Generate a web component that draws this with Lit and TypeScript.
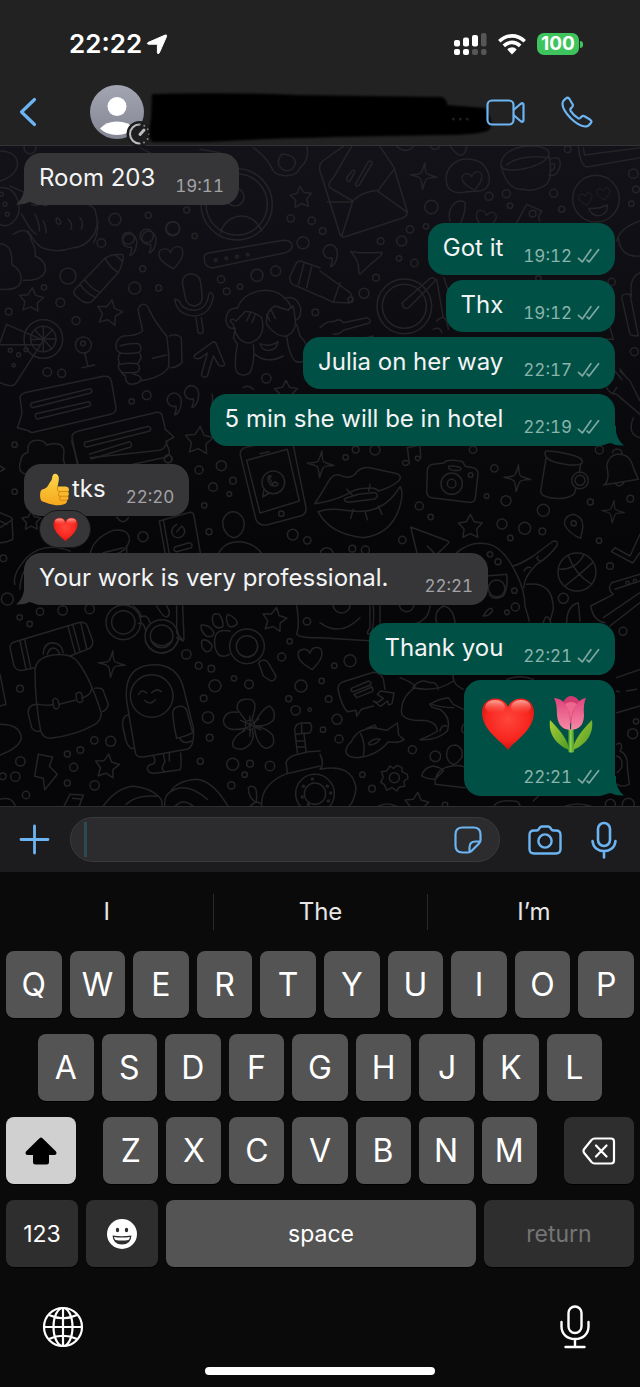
import { LitElement, html, svg, css, nothing } from "lit";
import { customElement, property } from "lit/decorators.js";

type Dot = [number, number, number];

interface Message {
  text?: string;
  time: string;
  mine?: boolean;
  tail?: boolean;
  thumb?: boolean;
  gifts?: boolean;
  reaction?: boolean;
  roomy?: boolean;
  first?: boolean;
}

const MESSAGES: Message[] = [
  { text: "Room 203", time: "19:11", tail: true },
  { text: "Got it", time: "19:12", mine: true, first: true },
  { text: "Thx", time: "19:12", mine: true },
  { text: "Julia on her way", time: "22:17", mine: true },
  { text: "5 min she will be in hotel", time: "22:19", mine: true, tail: true },
  { text: "tks", time: "22:20", thumb: true, reaction: true, first: true },
  { text: "Your work is very professional.", time: "22:21", tail: true, roomy: true },
  { text: "Thank you", time: "22:21", mine: true, first: true },
  { gifts: true, time: "22:21", mine: true, tail: true },
];

const star = (cx: number, cy: number, r: number, turn = 0) => {
  const pts: string[] = [];
  for (let i = 0; i < 10; i++) {
    const a = ((i * 36 - 90 + turn) * Math.PI) / 180;
    const k = i % 2 ? r * 0.52 : r;
    pts.push(`${(cx + k * Math.cos(a)).toFixed(1)},${(cy + k * Math.sin(a)).toFixed(1)}`);
  }
  return svg`<polygon points=${pts.join(" ")} />`;
};

const sparkle = (x: number, y: number, r: number) =>
  svg`<path transform="translate(${x} ${y}) scale(${r / 40}) rotate(5)" d="M0-40Q4-8 10-8Q12-6 40 0Q10 4 9 9Q6 12 0 40Q-6 10-10 8Q-14 4-40 0Q-10-4-9-9Q-5-14 0-40Z" />`;

const heart = (x: number, y: number, r: number, turn = 0) =>
  svg`<path transform="translate(${x} ${y}) rotate(${turn}) scale(${r / 38})" d="M0 36C-22 18-38 4-38-14C-38-36-8-38 0-16C8-38 38-36 38-14C38 4 22 18 0 36Z" />`;

const quote = (x: number, y: number) =>
  svg`<path transform="translate(${x} ${y})" d="M8 16C-14 20-26-2-12-18C8-34 26-14 24 6C22 28 12 40 4 42C2 38 12 30 8 16Z" />`;

const dots = (list: Dot[]) => list.map(([x, y, r]) => svg`<circle cx=${x} cy=${y} r=${r} />`);

/* Each tile of the wallpaper is drawn on a 960x720 grid, three units to the pixel. */
const tile = (x: number, y: number, list: Dot[], art: unknown) =>
  svg`<g transform="translate(${x} ${y}) scale(.33333)">${dots(list)}${art}</g>`;

const wallpaper = () => html`
  <svg class="wall" viewBox="0 145 640 661" preserveAspectRatio="xMidYMin slice" aria-hidden="true">
    ${tile(0, 0, [[345,655,18],[445,643,9],[560,627,9],[518,683,21],[872,652,11],[935,659,11],[90,440,18],[440,705,20],[385,712,18],[710,610,107],[710,610,92],[705,588,27],[15,610,6],[22,640,6],[4,580,6]], svg`
      ${star(903, 590, 34, -5)}
      <path d="M662 695C675 640 755 620 785 690M0 450C70 450 70 520 0 540M30 555L75 575M0 560C50 555 70 620 50 650C30 680 10 675 0 670M64 640C75 650 85 690 110 700M95 610C110 620 120 600 135 615C160 600 180 612 200 608C240 590 270 610 285 625C300 680 290 710 280 725M105 640Q120 670 118 690M130 660Q140 680 138 695M170 650q18 10 10 20q-16 0-10-20M205 655q14 12 8 30M240 650q12 14 4 34M760 440C800 470 810 490 820 510C840 530 890 530 900 500C925 480 925 450 920 436M845 460C820 490 850 520 875 505C900 480 880 460 845 460M420 440L455 458M600 445L660 455" />`)}
    ${tile(320, 0, [[507,586,12],[559,578,12],[570,614,8],[334,618,20],[701,577,12],[725,625,9],[940,518,14],[934,608,8],[318,676,8],[270,685,11],[948,565,10],[743,445,10],[345,430,15],[8,690,10],[828,593,70],[638,638,10]], svg`
      ${sparkle(311, 525, 40)} ${heart(458, 540, 30, -10)} ${heart(497, 656, 30, 10)}
      ${heart(797, 594, 20, -10)} ${heart(851, 578, 20, -10)}
      <path d="M806 622Q835 625 862 612C866 650 815 655 806 622ZM440 572C410 580 385 572 380 548C370 500 410 470 450 475C500 478 520 530 500 560C485 575 460 570 440 572M390 435Q430 490 440 436M230 436Q260 460 280 436" />
      <path d="M542 490C545 450 600 430 650 436C680 440 690 450 686 462C670 500 560 520 545 498ZM542 490Q560 570 610 565Q640 575 680 550Q698 530 688 465M690 475Q725 460 720 495Q710 530 686 522M692 490Q706 484 704 498Q700 508 690 510M560 492Q600 460 684 470" />
      <path d="M70 436L8 480Q-5 490 0 510L60 700Q66 712 80 706L250 650Q262 644 262 632L222 500L180 436M222 505L175 568Q130 570 98 600L30 560Q20 550 40 530L95 436M22 603L98 602L65 706M175 572L262 634M80 530L98 508Q106 506 104 514L90 540Q80 545 80 530ZM106 550L145 482Q155 476 156 488L118 552Q108 560 106 550Z" />
      <path d="M775 436Q780 490 800 498L960 470M790 440L794 462L960 440M390 660C380 620 410 590 435 604C440 640 420 660 415 690M590 665L620 610L665 630Q650 650 660 660" />`)}
    ${tile(0, 220, [[304,66,13],[204,165,24],[132,199,8],[181,245,13],[26,272,10],[228,299,12],[404,201,18],[476,201,9],[428,143,9],[519,22,20],[584,45,8],[909,65,18],[771,163,18],[827,150,15],[663,175,11],[680,211,10],[720,197,8],[946,274,10],[142,453,13],[185,457,12],[440,523,13],[395,541,8],[44,671,8],[799,472,14],[505,714,12],[130,354,58],[130,354,38],[250,372,24],[249,367,7],[31,388,6],[56,401,6],[78,386,6],[41,433,5],[647,118,4],[679,112,4],[711,107,4],[743,101,4]], svg`
      ${star(94, 238, 38, 5)} ${star(328, 276, 40, 12)} ${star(597, 660, 44, 5)} ${star(858, 514, 36)} ${heart(515, 110, 36, -10)}
      ${quote(386, 62)} ${quote(444, 54)} ${quote(520, 540)} ${quote(572, 518)}
      <path d="M40 40Q85 10 95 60Q110 90 105 105Q140 120 136 150Q125 180 70 178M0 68Q40 70 35 130Q70 150 62 185Q50 210 0 205M85 30Q110 80 140 85Q180 95 220 80Q260 78 285 35L294 0M20 310L130 358L45 490Q35 500 0 485M20 310L0 365M0 371L118 371M130 354V316M130 354L104 326M130 354L158 326M130 354L92 356M130 354L168 354M130 354L156 384M130 354V392M254 396L264 436M246 440L284 432" />
      <path d="M225 205L315 112Q330 100 366 100Q374 106 366 128Q360 150 350 160L275 242Q262 250 246 240L226 224Q218 214 225 205ZM315 112Q330 140 356 155M346 101L368 122M240 190Q260 218 285 228M254 176Q274 204 300 214" />
      <path d="M428 330L414 266Q420 248 434 250Q446 256 448 268Q470 310 500 345Q510 420 505 440Q485 470 420 480M428 330Q410 345 370 345Q345 355 348 380Q350 392 362 396Q350 410 358 424Q350 440 364 452Q366 462 376 464Q376 488 394 490Q420 488 424 474Q420 462 400 460M360 374Q390 366 415 368Q430 380 418 394Q390 400 362 396M358 430Q390 424 412 428Q424 440 414 452Q390 458 364 454M420 398Q428 412 412 428M458 412L500 402M508 345Q530 336 544 350L546 425Q530 440 512 440" />
      <path d="M547 185Q548 160 572 158Q600 160 602 185L607 230Q604 254 582 255Q560 252 556 230ZM524 234Q530 282 585 285Q632 280 640 225Q632 206 626 222Q620 265 583 268Q545 266 538 240ZM588 290L594 334Q604 342 610 332L604 290" />
      <path d="M613 110Q610 98 630 95L850 58Q880 58 876 80Q870 92 852 96L640 140Q612 142 613 110ZM870 165L890 124Q900 116 912 124L960 140M870 165Q866 190 890 195L960 226M912 128L895 190M935 138L920 200" />
      <path d="M582 404L640 362Q648 362 650 372L674 430Q668 440 656 432L640 405L622 465Q610 474 604 462L622 396L600 412Q582 416 582 404Z" />
      <path d="M712 262Q730 210 800 208Q850 210 876 262M712 262Q680 258 678 300Q684 325 700 322M852 232Q890 220 902 262Q904 290 890 296M700 310L690 300Q696 290 708 300L735 272Q760 270 785 290Q800 350 750 366Q710 366 700 310ZM885 290L880 255Q868 258 866 268L825 255Q795 270 800 310Q830 350 860 345Q892 330 885 290M740 300L752 275M756 305L766 280M810 300L800 280M826 292L814 268M706 322L700 350L712 370Q700 440 712 455Q730 470 750 455Q766 420 760 372M765 400Q800 430 850 405M860 345Q866 400 885 420Q905 430 922 410Q928 370 900 345L890 310M780 368Q810 380 834 362Q830 390 800 388Q784 384 780 368Z" />
      <path d="M60 530Q62 518 80 514L310 466Q330 464 334 480L348 560Q350 575 332 580L100 634Q92 636 88 630L52 620Q64 590 66 575ZM94 546L270 503Q280 508 272 516L98 560Q88 556 94 546ZM108 578L266 542Q276 548 268 556L112 594Q102 588 108 578Z" />
      <path d="M216 650Q214 636 236 630L470 574Q486 572 488 590L496 625L522 648L498 662L508 690Q510 706 490 710L260 760Q240 764 236 750ZM254 664L446 616Q456 620 450 630L260 678Q250 676 254 664ZM268 700L388 662Q398 668 392 678L274 714M62 720Q64 700 84 694Q80 660 110 658Q130 656 140 672Q190 660 192 690L190 720M730 500Q745 490 760 505M636 520Q640 530 636 550" />`)}
    ${tile(320, 220, [[182,60,10],[245,60,15],[237,112,8],[283,126,11],[168,170,10],[132,217,15],[875,183,11],[943,392,12],[107,686,10],[165,687,15],[459,686,11],[838,687,12],[655,172,8],[253,256,82],[253,256,66],[92,236,8]], svg`
      ${quote(28, 95)}
      <path d="M0 150L90 215Q106 240 88 246L40 244L0 225M60 185L40 244M92 92Q130 98 186 94Q186 104 175 110Q150 130 122 158Q116 160 116 148Q118 120 92 92ZM246 246L330 172Q345 166 345 180L266 260Q250 268 246 246ZM350 175L370 290M372 170L400 260M0 320Q20 300 40 302Q60 290 70 305L140 290Q156 296 148 306L70 328Q60 340 40 340M340 325Q360 315 366 335M350 300Q380 270 385 325M895 50Q900 110 960 105M890 60Q900 20 960 0M905 230Q905 215 930 220L955 345Q935 345 930 340ZM935 225Q925 170 960 155M820 330Q850 310 870 320L880 355H825M860 500Q870 520 890 520L960 580M890 500L880 515M900 450L930 480L960 540M885 450L905 475M900 444L918 468M940 590Q920 640 960 650M120 355L160 345" />`)}
    ${tile(0, 440, [[597,87,12],[664,74,15],[639,138,13],[699,119,10],[688,159,7],[613,193,8],[429,287,15],[627,272,9],[878,281,16],[922,298,11],[504,54,11],[44,152,8],[10,352,10],[22,474,18],[59,529,8],[120,512,11],[89,549,8],[188,508,14],[269,504,14],[559,640,14],[596,674,10],[634,683,10],[845,648,12],[869,601,8],[921,541,11],[844,218,8],[820,124,34],[370,544,52],[370,544,35],[485,586,50],[485,586,34],[741,616,52],[741,616,32]], svg`
      ${star(94, 240, 30)} ${star(823, 537, 38, 10)} ${sparkle(335, 669, 40)} ${sparkle(962, 70, 40)} ${heart(932, 652, 36, -8)}
      <path d="M62 60Q50 95 80 100Q90 130 110 100M192 60Q198 80 180 95L140 110M215 0L235 70M500 0Q500 20 480 28L270 50M0 215L35 230Q40 290 38 295Q20 305 0 305M0 260L38 236M20 250L0 240M0 75L14 84L0 92" />
      <path d="M722 46Q716 24 740 18L850-4Q872-6 880 14L918 200Q920 222 898 226L800 252Q776 254 768 236ZM740 58L862 25L898 180L780 216ZM780 38L808 32M806 104Q800 120 812 132Q830 140 834 128L824 122L818 130L808 112L814 106ZM792 146L788 168L808 156" />
      <path d="M668 240Q680 205 710 214Q740 230 730 265Q720 290 700 290Q668 280 668 240ZM655 340Q670 300 725 302Q770 310 790 345M478 240L570 214Q580 214 582 225L602 340M478 240L496 340M490 235L508 340M530 250C505 265 515 290 535 290C555 288 560 265 545 255L530 272M524 318L568 305Q580 310 574 320L530 332Q518 330 524 318ZM270 340Q280 290 340 268Q390 262 388 300Q380 330 345 340M310 335L370 320M380 315V340M350 228Q370 255 385 230M45 430Q35 400 80 350Q130 300 210 330M60 445Q60 390 105 345" />
      <path d="M30 620Q30 605 45 602L235 545Q255 540 262 555L278 600Q280 620 262 625L210 645M30 620L42 675Q50 690 68 688L105 680M60 600L78 684M74 596L92 680M204 556L226 638M218 550L240 632M242 545L260 622M130 640Q130 605 160 605Q185 608 190 635M142 640Q148 618 165 622Q175 626 178 638" />
      <path d="M420 530Q440 515 450 545M415 548Q430 540 438 570M400 495Q430 520 420 530M530 495V575L550 600L530 590M548 495L552 595M470 495Q490 530 500 528Q516 520 500 495M658 520Q672 540 668 558Q650 566 640 550Q632 525 645 518ZM684 520Q710 530 712 548Q700 562 686 555Q674 530 684 520ZM604 552Q630 550 642 575Q640 590 620 586Q600 570 604 552ZM606 598Q620 592 636 612Q636 634 618 632Q600 620 606 598ZM690 570Q650 562 645 590Q640 620 655 640Q670 652 688 640M776 665Q790 650 804 664L828 705Q826 720 812 720L790 705ZM890 495Q900 550 890 580Q900 592 960 590" />`)}
    ${tile(320, 440, [[77,49,8],[523,82,11],[500,165,7],[558,179,15],[298,195,12],[332,228,8],[670,208,18],[811,183,9],[931,173,10],[546,249,15],[614,262,18],[667,271,10],[571,291,8],[837,299,8],[247,297,11],[97,323,10],[136,327,12],[870,375,10],[730,472,15],[583,449,8],[586,498,12],[561,514,7],[909,571,12],[510,340,8],[534,362,9],[90,659,18],[43,674,8],[395,128,32],[395,128,13],[452,102,7],[771,393,57],[761,247,8],[780,118,25],[780,118,15],[20,340,20],[65,490,26],[260,490,22],[530,442,25],[923,426,5],[945,420,5]], svg`
      ${star(451, 258, 38)} ${sparkle(592, 112, 40)} ${sparkle(879, 212, 34)}
      <path d="M322 90Q322 72 340 70L372 66L378 60Q400 54 428 62L436 76L460 80Q474 84 474 98L466 172Q462 186 446 184L334 170Q320 166 320 152ZM386 76Q404 72 422 80Q426 90 410 88Q384 90 386 76ZM262 60Q245 55 248 68Q256 80 268 66L262 20L300 12L302 50Q284 40 286 54Q296 66 302 50" />
      <path d="M-16 188Q0 165 20 130Q40 92 62 104Q90 115 105 100Q120 75 150 80L232 98Q246 106 238 118Q215 140 175 150Q165 138 145 142Q110 140 80 160Q40 180-16 188ZM-6 212Q30 200 75 208Q140 218 178 198Q215 180 240 137Q252 150 240 195Q215 280 130 290Q30 280-6 212ZM80 145L100 165M150 130L146 150M75 180Q68 172 90 168L115 160L150 156Q172 150 172 166L165 174L85 184ZM100 205L92 232M135 210L142 236M175 195L186 220" />
      <path d="M676 32Q684 26 740 38Q795 50 786 66Q770 80 700 62Q670 50 676 32ZM678 52L662 150Q662 165 690 170Q735 178 762 160L768 142M782 70L778 95M855 130Q870 115 860 75Q865 45 890 40Q930 36 940 80L955 115L850 132M878 36Q878 24 894 24Q908 28 905 40M888 130Q900 142 912 124M734 252Q730 225 760 220Q792 228 788 262L782 292Q750 280 734 252ZM272 258L384 300Q390 305 380 312L350 340M272 258L292 340M322 315L346 340M960 280L930 345L885 320L874 332L938 366L960 335M410 335Q450 300 500 308Q550 315 590 400Q615 450 615 495L628 540M500 405L560 400Q565 440 550 465Q520 480 508 460M580 375Q600 370 640 345L700 300Q714 298 712 312Q690 345 650 370Q610 410 612 440M620 430Q700 420 700 505L690 540M612 390Q620 375 632 380M660 360Q645 352 655 346M500 510Q515 495 518 508Q510 525 490 525ZM740 545Q740 495 775 485L780 540M718 385Q770 385 792 340M735 435Q780 400 818 365M745 345Q765 400 815 430M875 425Q860 445 880 460L812 495Q820 540 855 545M875 425L960 400M850 530L960 455M870 555L960 485M885 445L960 420M0 590L160 600M0 545Q60 590 120 530M150 495V560Q138 575 145 580Q165 575 160 495M180 495V560M330 495Q325 545 270 550M350 545Q340 510 370 495Q400 500 405 545M670 545Q680 510 692 545" />`)}
    ${tile(0, 640, [[60,143,10],[611,172,10],[645,134,18],[747,130,13],[702,112,8],[624,229,17],[629,290,10],[601,361,9],[698,370,18],[750,368,10],[810,375,14],[734,401,8],[694,433,11],[903,135,18],[866,173,9],[887,208,14],[929,206,5],[283,298,11],[332,301,15],[241,327,10],[202,339,9],[221,379,12],[202,426,9],[284,433,14],[61,361,14],[46,407,14],[78,462,11],[8,406,10],[455,165,64],[750,252,14],[945,458,58],[945,458,32],[910,436,3],[937,414,3],[907,468,3],[925,490,3]], svg`
      ${star(321, 377, 38, 8)}
      <path d="M105 90Q105 50 160 42Q215 35 235 65Q270 110 302 210Q308 235 285 250Q230 282 150 292Q128 290 122 270Q105 180 105 90ZM112 190Q150 195 160 190M178 190L225 178M245 172Q275 160 274 145M158 178Q166 165 174 178L178 195Q170 210 162 200ZM228 158Q240 148 246 160L248 180Q238 190 230 178ZM112 190Q85 190 84 215L95 260Q105 275 122 270M285 142Q310 138 312 155L325 190Q322 205 308 212M0 100L18 190L0 195M0 250Q60 250 64 290Q60 320 0 342M436 0Q450 36 485 36Q520 34 534 0M455 0Q485 28 515 0" />
      <path d="M380 180Q370 80 450 72Q530 65 550 140L580 260Q585 320 560 325L430 348Q410 350 406 335ZM416 160Q425 142 440 156M455 155Q470 140 484 152M434 178Q450 195 466 176M518 215Q520 195 545 196Q560 200 562 215L578 275Q560 285 530 292Q520 250 518 215ZM384 222Q366 225 368 255L378 300Q390 330 404 320M540 292Q550 312 575 300M460 345Q470 362 460 368Q440 372 442 385Q446 398 465 397L540 386Q545 380 542 336M490 340L495 362Q480 385 492 390M508 336V360" />
      <path d="M735 175Q770 170 764 205L756 238M735 175Q708 178 712 205L738 240M712 214Q675 208 670 240Q675 275 735 262M735 268Q690 290 700 318Q725 335 750 310Q765 290 757 268M764 264Q770 310 795 322Q830 320 818 282Q800 262 768 256M764 244Q790 200 808 195Q830 210 820 238Q800 258 768 254M722 238L782 266M776 234L728 270M750 226V286" />
      <path d="M115 340L158 348L148 376L172 400L134 446L130 412L104 406ZM190 500L210 460L250 462L236 500M218 472L242 474M310 495Q350 440 400 436Q450 440 478 468Q490 480 485 498M378 490Q410 460 470 466M495 498Q490 465 512 452Q530 420 590 415Q640 420 685 498M512 452Q560 420 622 475M525 496Q550 470 580 496M745 440Q760 430 768 445Q772 470 768 484Q745 470 745 440ZM750 496Q770 475 785 490M862 395L858 365Q862 350 885 342L925 332L960 330M785 498Q780 430 860 398L960 375M892 335L884 265Q886 248 905 246L930 245Q940 260 930 275L912 278L918 330M888 280L914 276M888 300L914 300M890 318L916 318M905 248V276M0 475Q40 465 46 498" />`)}
    ${tile(320, 640, [[5,120,8],[26,174,10],[51,235,15],[9,266,8],[57,294,12],[277,326,12],[127,401,8],[156,443,10],[938,278,15],[948,241,8],[223,410,15],[871,490,15],[375,492,8],[925,490,18],[346,346,16],[22,436,3],[32,456,3],[25,480,3]], svg`
      ${star(290, 492, 38, 5)}
      <path d="M55 150Q50 130 70 122L160 94Q182 94 190 115L195 145M55 150Q65 195 82 212L108 208L110 225L124 205L160 195M94 142L146 120Q156 124 152 132L100 152Q90 150 94 142ZM102 160L156 138Q162 148 156 152L110 170ZM160 180L172 185L190 172L172 160L182 150L222 156L216 188L206 192L202 180L182 196ZM78 335Q75 320 95 300Q110 265 160 260L200 268L232 246L236 282L252 296Q235 308 205 302Q170 345 110 350Q85 350 78 335ZM122 278Q138 310 130 346M145 308Q160 290 180 295Q170 310 148 312M140 262L165 252L170 262" />
      <path d="M240 110Q290 130 285 140Q240 170 245 220Q260 240 305 238Q350 240 352 270Q340 280 300 296Q350 300 382 270Q395 230 360 205Q330 200 330 190Q350 175 385 170L400 190L430 205M278 140Q300 110 330 125Q350 120 355 145M330 188Q360 200 400 200M280 140Q350 155 400 120M360 270Q365 250 380 255M400 100Q395 130 430 145M305 405Q310 380 340 375Q365 380 370 390L345 415Q320 415 305 405ZM345 430Q345 380 400 374Q425 372 435 380M345 430L435 440M380 345Q378 312 408 312Q432 320 425 350Q410 370 400 370Q382 362 380 345ZM430 250Q420 270 430 275" />
      <path d="M210 375L220 382L232 373L246 380V392L262 400L264 412L252 420L254 436L238 438L230 450L216 440L200 448L194 432L182 424L190 408L184 392L200 390ZM0 340Q15 370 0 385M0 385Q95 365 108 440Q105 480 85 498M890 150L898 152M890 110L960 85M890 215L960 195M920 150L950 145M890 310Q905 300 905 320L900 330Q925 340 922 380L928 430Q905 440 892 430M890 345Q910 350 905 380L892 395M170 498Q200 480 235 498M520 498Q530 475 580 480Q600 480 600 498M640 480L655 465M730 498Q770 480 820 498M560 115Q600 100 640 115" />`)}
  </svg>
`;

const ticks = html`<svg class="ticks" viewBox="0 0 24 16" aria-label="Delivered" role="img">
  <path d="M1.500 10.500 5.500 14.200 14.500 1.500M10.500 12.200 12.600 14.200 22.500 1.500" />
</svg>`;

const redHeart = (cls: string) => html`<svg class=${cls} viewBox="0 0 54 54" role="img" aria-label="Red heart">
  <defs>
    <radialGradient id="hg" cx=".5" cy=".4" r=".62">
      <stop offset="0" stop-color="#ff463c" /><stop offset=".65" stop-color="#f7261f" /><stop offset="1" stop-color="#c9100f" />
    </radialGradient>
    <linearGradient id="hs" x1="0" y1="0" x2="0" y2="1">
      <stop offset="0" stop-color="#ffc2b6" stop-opacity=".85" /><stop offset="1" stop-color="#ff5a4b" stop-opacity="0" />
    </linearGradient>
  </defs>
  <path fill="url(#hg)" d="M27 53C23 46 1 34 1 15.500C1 6.500 7 1.500 14 1.500C20 1.500 24.500 4.500 27 10C29.500 4.500 34 1.500 40 1.500C47 1.500 53 6.500 53 15.500C53 34 31 46 27 53Z" />
  <ellipse cx="14" cy="10" rx="10" ry="7" fill="url(#hs)" /><ellipse cx="40" cy="10" rx="10" ry="7" fill="url(#hs)" />
</svg>`;

const tulip = html`<svg class="big" viewBox="0 0 54 58" role="img" aria-label="Tulip">
  <defs>
    <linearGradient id="tp" x1="0" y1="0" x2="0" y2="1"><stop offset="0" stop-color="#e0447c" /><stop offset="1" stop-color="#f78aa6" /></linearGradient>
    <linearGradient id="tl" x1="0" y1="0" x2="1" y2="1"><stop offset="0" stop-color="#a9cf35" /><stop offset="1" stop-color="#4d9a25" /></linearGradient>
  </defs>
  <path fill="url(#tl)" d="M6 25C4 40 13 50 25 55C25 46 15 34 6 25Z" />
  <path fill="url(#tl)" d="M48 25C50 40 41 50 29 55C29 46 39 34 48 25Z" />
  <path fill="#64b033" d="M24.500 34H29.500L30 57Q27 58.500 24.500 57Z" />
  <path fill="#8bd050" d="M26 35H27.500V57H26Z" />
  <path fill="#d23a72" d="M18 9Q22 1 27 1Q33 1 37 9L33 28H21Z" />
  <path fill="url(#tp)" d="M10 3Q17 3 21 9Q27 17 26 35Q14 34 13 20Q13 8 10 3Z" />
  <path fill="url(#tp)" d="M42 3Q36 4 33 9Q27 17 27 35Q40 34 40 20Q39 9 42 3Z" />
  <path fill="#f5779a" d="M21 9Q27 5 33 9Q27 16 27 30Q26 16 21 9Z" opacity=".75" />
</svg>`;

const thumb = html`<svg class="thumb" viewBox="0 0 30 32" role="img" aria-label="Thumbs up">
  <defs><linearGradient id="th" x1="0" y1="0" x2="0" y2="1"><stop offset="0" stop-color="#ffd64a" /><stop offset="1" stop-color="#f5a81c" /></linearGradient></defs>
  <path fill="url(#th)" d="M13 3Q14 0 17 1Q20 3 19 8L18 13H26Q29 13.500 29 16Q29 18 28 18.500Q30 20 28 22.500Q29.500 25 27 26.500Q27.500 29 25 30Q20 32 15 31Q9 30 5 28Q1 28 1 22Q1 17 3 16Q8 15 10 10Q13 7 13 3Z" />
  <path fill="none" stroke="#d98a12" stroke-width="1" stroke-linecap="round" d="M18 13.500Q17 18 20 18H28M20 18Q17 22.500 21 22.500H28M21 22.500Q18 26.500 22 26.500H27" />
</svg>`;

const micSmall = html`<svg width="28" height="38" viewBox="0 0 28 38" aria-hidden="true">
  <g fill="none" stroke="currentColor" stroke-width="2.600" stroke-linecap="round">
    <rect x="8" y="2" width="12" height="23" rx="6" /><path d="M2.500 20C3 26.500 8 30 14 30S25 26.500 25.500 20M14 30V36.500" />
  </g></svg>`;

@customElement("chat-message")
class ChatMessage extends LitElement {
  @property({ attribute: false }) msg!: Message;

  static styles = css`
    :host { display: flex; }
    :host([mine]) { justify-content: flex-end; }
    .bubble {
      position: relative; display: flex; justify-content: space-between; gap: 20px;
      box-sizing: border-box; min-height: 52px; padding: 10px 15px 7px;
      border-radius: 17px; background: #363638; color: #f4f4f5;
    }
    .mine { background: #005046; }
    .roomy { gap: 36px; }
    .text { display: flex; align-items: center; gap: 2px; font-size: 24px; line-height: 30px; height: 30px; white-space: nowrap; }
    .meta { display: flex; align-items: center; gap: 5px; align-self: flex-end; font-size: 17px; line-height: 24px; color: #a3a3a7; }
    time { min-width: 48px; text-align: right; font-variant-numeric: tabular-nums; }
    .mine .meta { color: #8ab3ab; }
    .ticks { width: 23px; height: 16px; fill: none; stroke: #7da79f; stroke-width: 1.800; stroke-linecap: round; stroke-linejoin: round; }
    .tail { position: absolute; bottom: 0; left: -8px; width: 26px; height: 20px; fill: #363638; }
    .mine .tail { left: auto; right: -9px; transform: scaleX(-1); fill: #005046; }
    .thumb { width: 31px; height: 33px; }
    .stack { flex-direction: column; gap: 12px; padding: 15px 15px 7px; }
    .gifts { display: flex; gap: 9px; padding: 0 2px; }
    .big { width: 54px; height: 58px; }
    .wrap { display: grid; justify-items: start; }
    .reaction {
      display: grid; place-items: center; width: 50px; height: 36px; margin: -6px 0 0 15px; z-index: 1;
      border-radius: 19px; background: #363638; border: 1px solid #16171c; box-sizing: content-box;
    }
    .small { width: 25px; height: 25px; }
  `;

  render() {
    const m = this.msg;
    const cls = `bubble ${m.mine ? "mine" : ""} ${m.roomy ? "roomy" : ""} ${m.gifts ? "stack" : ""}`;
    return html`<div class="wrap">
      <div class=${cls}>
        ${m.tail ? html`<svg class="tail" viewBox="0 0 26 20" aria-hidden="true"><path d="M8 0V6Q6 15 0 19.500Q8 20 13.500 17L26 20V0Z" /></svg>` : nothing}
        ${m.gifts
          ? html`<span class="gifts">${redHeart("big")}${tulip}</span>`
          : html`<span class="text">${m.thumb ? thumb : nothing}${m.text}</span>`}
        <span class="meta"><time>${m.time}</time>${m.mine ? ticks : nothing}</span>
      </div>
      ${m.reaction ? html`<span class="reaction">${redHeart("small")}</span>` : nothing}
    </div>`;
  }
}

@customElement("key-board")
class KeyBoard extends LitElement {
  static styles = css`
    :host { display: block; background: #0a0a0a; color: #fff; }
    button { font: inherit; color: inherit; border: 0; padding: 0; margin: 0; background: none; display: grid; place-items: center; min-width: 0; }
    .suggest { display: grid; grid-template-columns: repeat(3, 1fr); height: 79px; align-items: center; font-size: 24px; color: #e6e6e6; }
    .suggest button { height: 36px; }
    .suggest button + button { border-left: 1px solid #2a2a2a; }
    .keys { display: grid; gap: 16px; padding: 0 6px; }
    .row { display: flex; gap: 8px; }
    .key { flex: 1 1 0; height: 67px; border-radius: 8px; background: #545454; font-size: 32px; box-shadow: 0 1px 0 #000; }
    .second { padding: 0 32px; }
    .third { gap: 27px; }
    .letters { flex: 1; display: flex; gap: 8px; }
    .dark { background: #2e2e2e; }
    .light { background: #d0d0d0; color: #000; }
    .side { flex: 0 0 11.200%; }
    .word { font-size: 23px; }
    .mode { flex-grow: 72; }
    .space { flex-grow: 310; }
    .enter { flex-grow: 150; color: #757575; }
    .foot { display: flex; justify-content: space-between; align-items: center; padding: 36px 50px 0 42px; height: 48px; }
    .home { width: 36%; height: 8px; border-radius: 4px; background: #fff; margin: 16px auto 12px; }
  `;

  letter = (c: string) => html`<button class="key">${c}</button>`;

  render() {
    return html`
      <div class="suggest"><button>I</button><button>The</button><button>I’m</button></div>
      <div class="keys">
        <div class="row">${[..."QWERTYUIOP"].map(this.letter)}</div>
        <div class="row second">${[..."ASDFGHJKL"].map(this.letter)}</div>
        <div class="row third">
          <button class="key side light" aria-label="Shift">
            <svg width="32" height="28" viewBox="0 0 32 28" aria-hidden="true"><path d="M14.500 1.200Q16 0 17.500 1.200L31 14.500Q32.500 17.500 29.500 18H24V25Q24 27.500 21.500 27.500H10.500Q8 27.500 8 25V18H2.500Q-.5 17.500 1 14.500Z" /></svg>
          </button>
          <div class="letters">${[..."ZXCVBNM"].map(this.letter)}</div>
          <button class="key side dark" aria-label="Delete">
            <svg width="34" height="28" viewBox="0 0 34 28" fill="none" stroke="#fff" stroke-width="2.200" stroke-linecap="round" stroke-linejoin="round" aria-hidden="true"><path d="M12.500 1.500H29Q32 1.500 32 4.500V23.500Q32 26.500 29 26.500H12.500Q11 26.500 9.500 25L2.200 16Q.8 14 2.200 12L9.500 3Q11 1.500 12.500 1.500ZM14 8.500 24.500 19.500M24.500 8.500 14 19.500" /></svg>
          </button>
        </div>
        <div class="row">
          <button class="key word dark mode">123</button>
          <button class="key dark mode" aria-label="Emoji">
            <svg width="30" height="30" viewBox="0 0 30 30" aria-hidden="true"><circle cx="15" cy="15" r="15" fill="#fff" /><g fill="#2e2e2e"><ellipse cx="10.500" cy="11" rx="1.700" ry="2.200" /><ellipse cx="19.500" cy="11" rx="1.700" ry="2.200" /><path d="M5.500 16.500Q15 18 24.500 16.500Q24 25.500 15 25.500T5.500 16.500Z" /></g><path fill="#fff" d="M7 18Q15 19 23 18Q22.500 20.500 21.500 21Q15 22 8.500 21Q7.500 20.500 7 18Z" /></svg>
          </button>
          <button class="key word space">space</button>
          <button class="key word dark enter">return</button>
        </div>
      </div>
      <div class="foot">
        <button aria-label="Next keyboard">
          <svg width="42" height="42" viewBox="0 0 42 42" fill="none" stroke="#fff" stroke-width="2.200" aria-hidden="true"><circle cx="21" cy="21" r="19" /><ellipse cx="21" cy="21" rx="9.500" ry="19" /><path d="M21 2V40M2 21H40M7 9Q21 15.500 35 9M7 33Q21 26.500 35 33" /></svg>
        </button>
        <button aria-label="Dictate">
          <svg width="30" height="44" viewBox="0 0 30 44" fill="none" stroke="#fff" stroke-width="2.400" stroke-linecap="round" aria-hidden="true"><rect x="8.500" y="1.500" width="13" height="26.500" rx="6.500" /><path d="M1.500 17V21.500C1.500 29 7 34 15 34S28.500 29 28.500 21.500V17M15 34V42M5.500 42H24.500" /></svg>
        </button>
      </div>
      <div class="home"></div>
    `;
  }
}

@customElement("app-root")
class AppRoot extends LitElement {
  static styles = css`
    :host { display: flex; flex-direction: column; min-height: 100vh; background: #0a0a0a; font-family: Inter, "Noto Sans", sans-serif; color: #fff; }
    button { font: inherit; color: #6cb4f2; background: none; border: 0; padding: 0; margin: 0; display: grid; place-items: center; }
    header { background: #222; border-bottom: 1px solid #333337; }
    .status { display: flex; align-items: center; height: 22px; padding: 33px 57px 30px 69px; }
    .clock { font-size: 26px; line-height: 30px; font-weight: 600; flex: none; }
    .arrow { margin: 0 auto 0 4px; }
    .signal { margin-right: 11px; }
    .wifi { margin-right: 11px; }
    .battery { display: flex; align-items: center; gap: 1px; }
    .level { width: 42px; height: 22px; border-radius: 7px; background: #3dc45c; font-size: 19px; line-height: 22px; font-weight: 700; text-align: center; }
    .nub { width: 3px; height: 7px; border-radius: 0 3px 3px 0; background: #3dc45c; }
    .bar { display: flex; align-items: center; height: 54px; padding: 0 47px 6px 19px; }
    .avatar { width: 62px; height: 54px; margin-left: 52px; overflow: visible; flex: none; }
    .name { flex: 1; min-width: 0; height: 54px; margin: 0 -6px 0 -4px; overflow: visible; }
    .call { margin-left: 36px; }
    main { display: grid; flex: 1; background: linear-gradient(#131219, #0b0b0f 35%, #060608 60%); overflow: hidden; }
    .wall, .list { grid-area: 1 / 1; }
    .wall { width: 100%; height: 100%; min-height: 0; contain: size; fill: none; stroke: #242427; stroke-width: 4.500; stroke-linejoin: round; stroke-linecap: round; }
    .list { display: flex; flex-direction: column; gap: 5px; padding: 7px 25px 10px 24px; z-index: 1; }
    .first { margin-top: 13px; }
    .compose { display: flex; align-items: center; height: 65px; background: #1c1c1e; border-top: 1px solid #2d2d30; padding: 0 22px 0 19px; }
    .field { flex: 1; min-width: 0; display: flex; align-items: center; height: 45px; margin: 0 28px 0 20px; padding: 0 17px 0 13px; border-radius: 23px; background: #2c2c2e; border: 1px solid #3a3a3c; box-sizing: border-box; }
    .caret { width: 3px; height: 35px; background: #2c4a56; }
    input { flex: 1; min-width: 0; border: 0; outline: 0; background: none; color: #fff; font: inherit; font-size: 24px; }
    .voice { margin-left: 28px; }
  `;

  render() {
    return html`
      <header>
        <div class="status">
          <span class="clock">22:22</span>
          <svg class="arrow" width="22" height="21" viewBox="0 0 22 21" aria-hidden="true"><path fill="#fff" stroke="#fff" stroke-width="1" stroke-linejoin="round" d="M19.300 1Q21.300.6 20.500 2.600L13.300 18.900Q12 20.600 11.400 18.900V11.200Q11.400 10.200 10.300 10.200H2.200Q.4 9.600 2 8.500Z" /></svg>
          <svg class="signal" width="33" height="22" viewBox="0 0 33 22" aria-hidden="true">
            <g fill="#fff"><rect y="7" width="6" height="6.500" rx="2" /><rect x="9" y="4.500" width="6" height="9" rx="2" /><rect x="18" y="2" width="6" height="11.500" rx="2" /><rect y="16" width="6" height="6" rx="2" /><rect x="9" y="16" width="6" height="6" rx="2" /></g>
            <g fill="#565656"><rect x="27" width="5.500" height="13.500" rx="2" /><rect x="18" y="16" width="6" height="6" rx="2" /><rect x="27" y="16" width="5.500" height="6" rx="2" /></g>
          </svg>
          <svg class="wifi" width="28" height="21" viewBox="0 0 28 21" aria-hidden="true">
            <g fill="none" stroke="#fff" stroke-width="3.600"><path d="M1.300 7.300Q7 1.900 14 1.900T26.700 7.300M5.800 11.900Q9.500 8.400 14 8.400T22.200 11.900" /></g>
            <path fill="#fff" d="M14 13.200Q17 13.200 18.700 15.500L14 20.500L9.300 15.500Q11 13.200 14 13.200Z" />
          </svg>
          <div class="battery"><span class="level">100</span><span class="nub"></span></div>
        </div>
        <div class="bar">
          <button aria-label="Back"><svg width="19" height="30" viewBox="0 0 19 30" fill="none" stroke="currentColor" stroke-width="3.200" stroke-linecap="round" stroke-linejoin="round" aria-hidden="true"><path d="M15.500 2.500 2.500 15 15.500 27.500" /></svg></button>
          <svg class="avatar" viewBox="0 0 62 54" role="img" aria-label="Contact photo">
            <defs>
              <linearGradient id="av" x1="0" y1="0" x2="0" y2="1"><stop offset="0" stop-color="#a3a5b3" /><stop offset="1" stop-color="#858693" /></linearGradient>
              <clipPath id="ac"><circle cx="27" cy="27" r="27" /></clipPath>
            </defs>
            <circle cx="27" cy="27" r="27" fill="url(#av)" />
            <g fill="#fff" clip-path="url(#ac)"><circle cx="27" cy="21.500" r="9.500" /><path d="M10 43.500Q16 36.500 27 36.500T44 43.500Q38 50 27 50T10 43.500Z" /></g>
            <circle cx="49.500" cy="49" r="13" fill="#1d1d1f" />
            <g fill="none" stroke="#bcbcbf" stroke-width="2" stroke-linecap="round"><path d="M49.500 39.500A9.500 9.500 0 1 0 49.500 58.500" /><path d="M49.500 39.500A9.500 9.500 0 0 1 49.500 58.500" stroke-dasharray="0 5" stroke="#88888b" /><path stroke-width="3" d="M50 49.500 54 45" /></g>
          </svg>
          <svg class="name" viewBox="0 0 347 54" preserveAspectRatio="none" role="img" aria-label="Hidden name">
            <defs><filter id="soft"><feGaussianBlur stdDeviation="1.300" /></filter></defs>
            <path filter="url(#soft)" d="M4 9Q80 7 150 10L297 12Q301 14 302 20L340 23Q350 38 344 45Q335 50 298 50L190 52Q110 54 60 57H4L1 50Q4 30 4 9Z" />
            <g fill="#1f1f1f"><circle cx="308" cy="34" r="1.500" /><circle cx="315" cy="34" r="1.500" /><circle cx="322" cy="34" r="1.500" /></g>
          </svg>
          <button aria-label="Video call"><svg width="39" height="27" viewBox="0 0 39 27" fill="none" stroke="currentColor" stroke-width="2.200" stroke-linejoin="round" aria-hidden="true"><rect x="1.500" y="1.500" width="26" height="24" rx="4.500" /><path d="M27.500 11 34.500 5Q37.500 3 37.500 6V21Q37.500 24 34.500 22L27.500 16" /></svg></button>
          <button class="call" aria-label="Voice call"><svg width="32" height="32" viewBox="0 0 32 32" fill="none" stroke="currentColor" stroke-width="2.200" stroke-linejoin="round" aria-hidden="true"><path d="M5 2.300Q6.800 1 8.300 2.800L11.600 8.200Q12.400 9.800 11 11.200L9.600 12.600Q9 13.600 9.600 14.800Q12.500 19.300 17 22.200Q18.200 22.900 19.200 22L20.600 20.600Q21.900 19.500 23.500 20.300L29.300 23.800Q31.100 25.200 30 26.800Q27.500 30.500 24 30.500Q17.500 30 9.500 22Q1.500 13.500 1.500 8Q1.500 4.800 5 2.300Z" /></svg></button>
        </div>
      </header>
      <main>
        ${wallpaper()}
        <div class="list">
          ${MESSAGES.map((m) => html`<chat-message class=${m.first ? "first" : ""} ?mine=${m.mine} .msg=${m}></chat-message>`)}
        </div>
      </main>
      <div class="compose">
        <button aria-label="Attach"><svg width="31" height="31" viewBox="0 0 31 31" stroke="currentColor" stroke-width="2.800" stroke-linecap="round" aria-hidden="true"><path d="M15.500 2V29M2 15.500H29" /></svg></button>
        <div class="field">
          <span class="caret"></span>
          <input type="text" aria-label="Message" />
          <button aria-label="Stickers"><svg width="28" height="28" viewBox="0 0 28 28" fill="none" stroke="currentColor" stroke-width="2.200" stroke-linejoin="round" aria-hidden="true"><path d="M8.500 1.500H19.500Q26.500 1.500 26.500 8.500V14Q26.500 16 25 17.500L17.500 25Q16 26.500 14 26.500H8.500Q1.500 26.500 1.500 19.500V8.500Q1.500 1.500 8.500 1.500ZM15.500 26V21.500Q15.500 15.500 21.500 15.500H26" /></svg></button>
        </div>
        <button aria-label="Camera"><svg width="34" height="30" viewBox="0 0 34 30" fill="none" stroke="currentColor" stroke-width="2.400" stroke-linejoin="round" aria-hidden="true"><path d="M6 5.500H8.500Q9.800 5.500 10.500 4.500L11.500 3Q12.500 1.500 14 1.500H20Q21.500 1.500 22.500 3L23.500 4.500Q24.200 5.500 25.500 5.500H28Q32.500 5.500 32.500 10V24Q32.500 28.500 28 28.500H6Q1.500 28.500 1.500 24V10Q1.500 5.500 6 5.500Z" /><circle cx="17" cy="16" r="6.600" /></svg></button>
        <button class="voice" aria-label="Record voice">${micSmall}</button>
      </div>
      <key-board></key-board>
    `;
  }
}
